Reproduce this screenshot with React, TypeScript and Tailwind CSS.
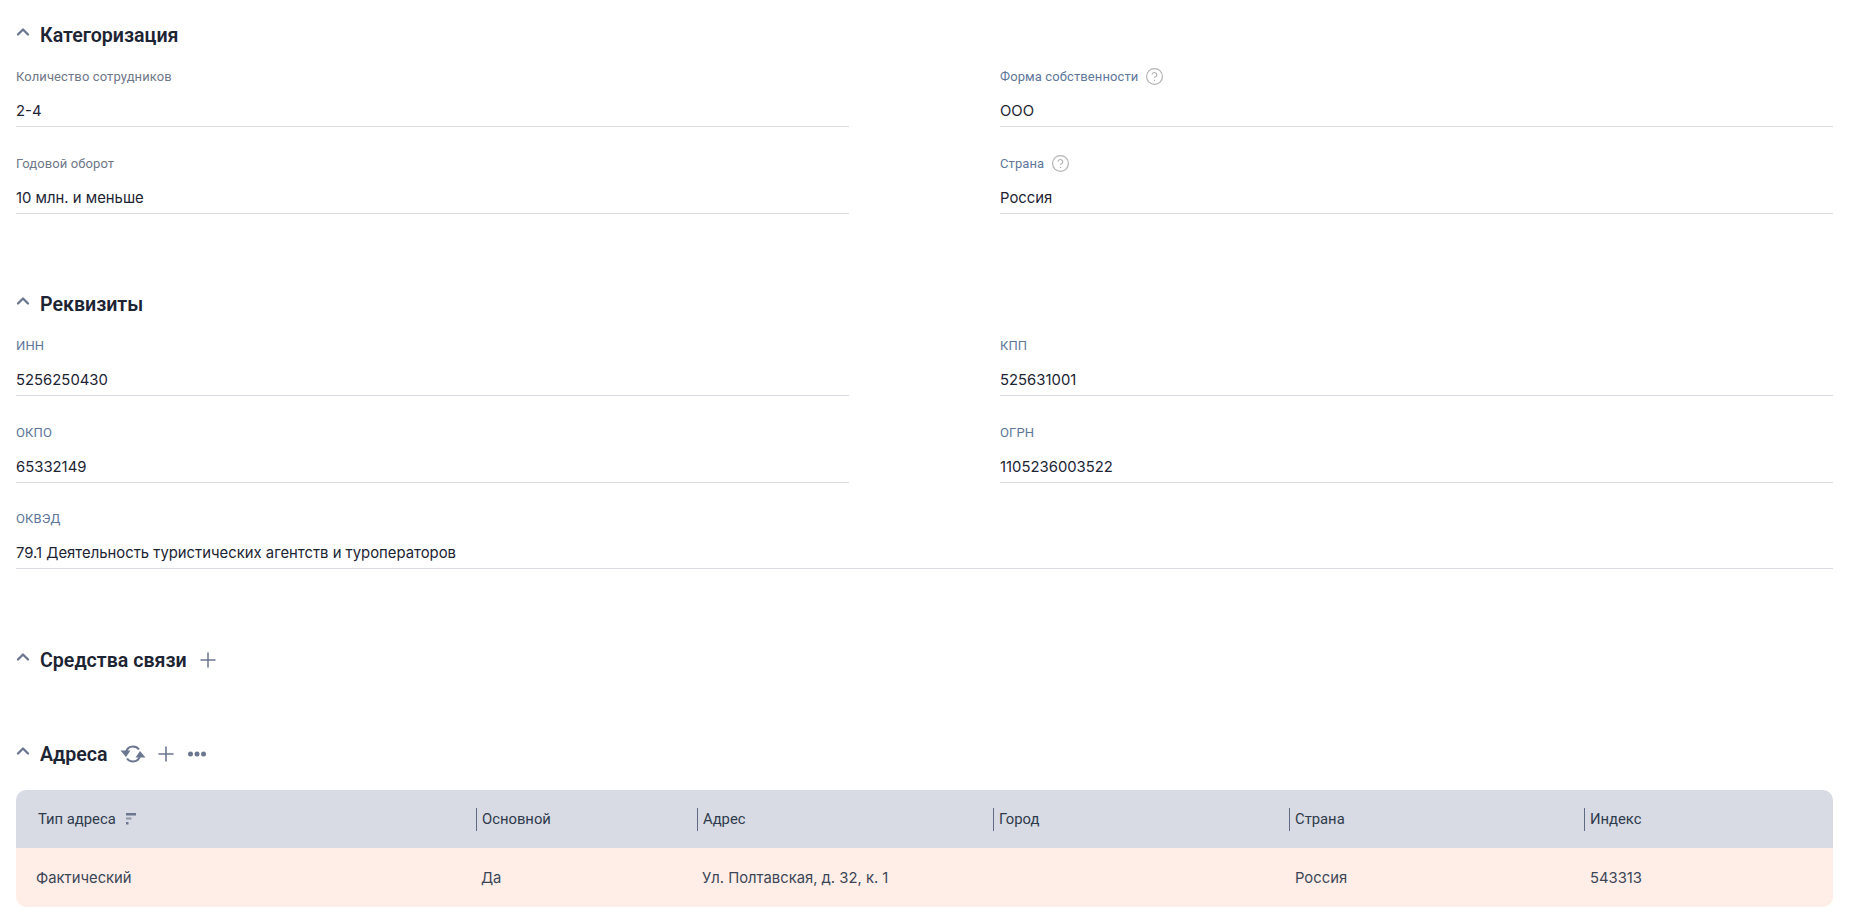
import React from "react";
import { ChevronUp, CircleHelp, Plus } from "lucide-react";

const Field = ({ label, value, help, span, blue }: { label: string; value: string; help?: boolean; span?: boolean; blue?: boolean }) => (
  <div className={span ? "col-span-2" : ""}>
    <div className={`flex h-[17px] items-center gap-[7px] text-[13px] leading-[17px] tracking-[0.008em] ${blue ? "text-[#60779a]" : "text-[#6f7889]"}`}>
      <span>{label}</span>
      {help && <CircleHelp className="h-[19px] w-[19px] text-[#b4b4b4]" strokeWidth={1.5} />}
    </div>
    <div className="mt-[15px] h-[22px] font-['Inter',sans-serif] text-[14.850px] leading-[22px] text-[#1d2433]">{value}</div>
    <div className="mt-[4px] h-px bg-[#d8dbe4]" />
  </div>
);

const Heading = ({ children, extra }: { children: string; extra?: React.ReactNode }) => (
  <div className="flex h-[24px] translate-y-px items-center">
    <ChevronUp className="-ml-[3px] h-[20px] w-[20px] -translate-y-[4px] text-[#6b7790]" strokeWidth={2.8} />
    <h2 className="ml-[7px] text-[19.600px] font-semibold leading-[24px] text-[#1d2433]">{children}</h2>
    {extra}
  </div>
);

const Sync = () => (
  <svg width="26" height="20" viewBox="0 0 26 20" fill="none" className="ml-[12px] -translate-y-px text-[#6b7790]">
    <path d="M6 8C7 4.500 9.500 2.500 13 2.500c2.600 0 4.600 1 6 3" stroke="currentColor" strokeWidth="2" />
    <path d="M0.500 6.500h10L6 13z" fill="currentColor" />
    <path d="M20 12c-1 3.500-3.500 5.500-7 5.500-2.600 0-4.600-1-6-3" stroke="currentColor" strokeWidth="2" />
    <path d="M25.500 13.500h-10L20 7z" fill="currentColor" />
  </svg>
);

const Dots = () => (
  <svg width="20" height="6" viewBox="0 0 20 6" className="ml-[9px] -translate-y-px text-[#6b7790]">
    <circle cx="3.500" cy="3" r="2.500" fill="currentColor" />
    <circle cx="10" cy="3" r="2.500" fill="currentColor" />
    <circle cx="16.500" cy="3" r="2.500" fill="currentColor" />
  </svg>
);

const Sort = () => (
  <svg width="10" height="12" viewBox="0 0 10 12" className="ml-[10px]">
    <rect x="0" y="0" width="10" height="2.500" fill="#6b7790" />
    <rect x="0" y="4.500" width="5.500" height="2" fill="#8d96a8" />
    <rect x="0" y="9" width="2.500" height="2.500" fill="#6b7790" />
  </svg>
);

const HeadCell = ({ children }: { children: React.ReactNode }) => (
  <div className="flex h-[58px] items-center">
    <div className="h-[23px] w-px bg-[#5d6b85]" />
    <span className="ml-[5px]">{children}</span>
  </div>
);

const cols = "grid grid-cols-[460px_221px_296px_296px_295px_249px]";

export default function App() {
  return (
    <div className="h-[923px] bg-white px-4 pt-[23px] font-['Roboto',sans-serif]">
      <Heading>Категоризация</Heading>
      <div className="mt-[21px] grid grid-cols-2 gap-x-[151px] gap-y-[27.500px]">
        <Field label="Количество сотрудников" value="2-4" />
        <Field label="Форма собственности" value="ООО" help blue />
        <Field label="Годовой оборот" value="10 млн. и меньше" />
        <Field label="Страна" value="Россия" help blue />
      </div>

      <div className="mt-[78.500px]">
        <Heading>Реквизиты</Heading>
      </div>
      <div className="mt-[21px] grid grid-cols-2 gap-x-[151px] gap-y-[27.500px]">
        <Field label="ИНН" value="5256250430" blue />
        <Field label="КПП" value="525631001" blue />
        <Field label="ОКПО" value="65332149" blue />
        <Field label="ОГРН" value="1105236003522" blue />
        <Field label="ОКВЭД" value="79.1 Деятельность туристических агентств и туроператоров" span blue />
      </div>

      <div className="mt-[79px]">
        <Heading extra={<Plus className="ml-[9px] h-[24px] w-[24px] -translate-y-px text-[#6b7790]" strokeWidth={1.5} />}>
          Средства связи
        </Heading>
      </div>

      <div className="mt-[70px]">
        <Heading
          extra={
            <>
              <Sync />
              <Plus className="ml-[8px] h-[24px] w-[24px] -translate-y-px text-[#6b7790]" strokeWidth={1.6} />
              <Dots />
            </>
          }
        >
          Адреса
        </Heading>
      </div>

      <div className="mt-[24px] overflow-hidden rounded-[10px] text-[14.800px] text-[#2f3a4c]">
        <div className={`${cols} bg-[#d8dbe3]`}>
          <div className="flex h-[58px] items-center pl-[22px]">
            Тип адреса
            <Sort />
          </div>
          <HeadCell>Основной</HeadCell>
          <HeadCell>Адрес</HeadCell>
          <HeadCell>Город</HeadCell>
          <HeadCell>Страна</HeadCell>
          <HeadCell>Индекс</HeadCell>
        </div>
        <div className={`${cols} h-[59px] items-center bg-[#ffeee8] pt-px font-['Inter',sans-serif] text-[14.800px] text-[#3d4656]`}>
          <div className="pl-[20px]">Фактический</div>
          <div className="pl-[5px]">Да</div>
          <div className="pl-[5px]">Ул. Полтавская, д. 32, к. 1</div>
          <div />
          <div className="pl-[6px]">Россия</div>
          <div className="pl-[6px]">543313</div>
        </div>
      </div>
    </div>
  );
}
